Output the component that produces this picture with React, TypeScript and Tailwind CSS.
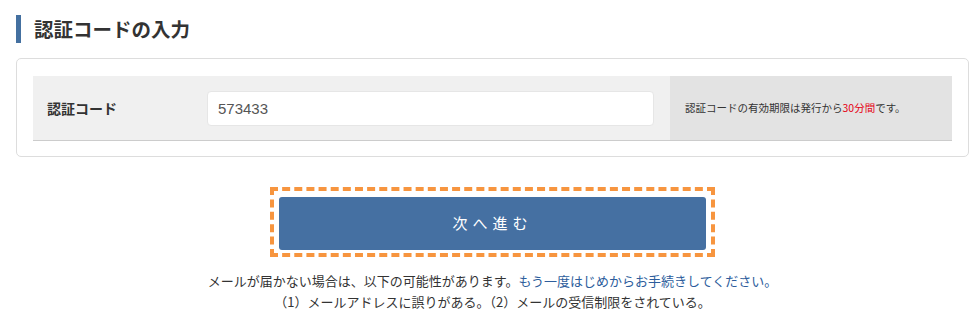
import React from "react";

const jp = "font-['Meiryo','Noto_Sans_CJK_JP',sans-serif]";

export default function App() {
  return (
    <div className={`min-h-[319px] bg-white pl-4 pr-[6px] pt-[15px] text-[#333] ${jp}`}>
      {/* heading */}
      <h2 className="flex h-[28px] items-center border-l-[5px] border-[#4470a0] pl-[13px] text-[19.5px] font-bold leading-none">
        認証コードの入力
      </h2>

      {/* form card */}
      <div className="mt-[15px] rounded-[5px] border border-[#dddddd] px-4 pt-[17px] pb-[15px]">
        <div className="flex h-[65px] border-b border-[#cccccc]">
          <div className="flex flex-1 items-center bg-[#f0f0f0]">
            <span className="w-[174px] pl-[14px] text-[14px] font-bold">認証コード</span>
            <input
              defaultValue="573433"
              className="h-[35px] w-[447px] rounded-[4px] border border-[#e6e6e6] bg-white px-[10px] font-['Liberation_Sans',sans-serif] text-[15px] text-[#555] outline-none"
            />
            <span className="w-4" />
          </div>
          <div className="flex w-[284px] items-center bg-[#e3e3e3] pl-[15px] text-[10.5px]">
            認証コードの有効期限は発行から<span className="text-[#e60012]">30分間</span>です。
          </div>
        </div>
      </div>

      {/* submit */}
      <div className="mt-[30px] flex justify-center">
        <div className="h-[70px] w-[445px] border-4 border-dashed border-[#f7953f] px-[5px] pt-[6px]">
          <button className="flex h-[53px] w-full items-center justify-center rounded-[3px] bg-[#4570a2] text-[15px] tracking-[5px] text-white">
            次へ進む
          </button>
        </div>
      </div>

      {/* notes */}
      <div className="mt-[13px] text-center text-[13px] leading-[21px]">
        <p>
          メールが届かない場合は、以下の可能性があります。
          <a className="text-[#2d5d9c]">もう一度はじめからお手続きしてください。</a>
        </p>
        <p>（1）メールアドレスに誤りがある。（2）メールの受信制限をされている。</p>
      </div>
    </div>
  );
}
